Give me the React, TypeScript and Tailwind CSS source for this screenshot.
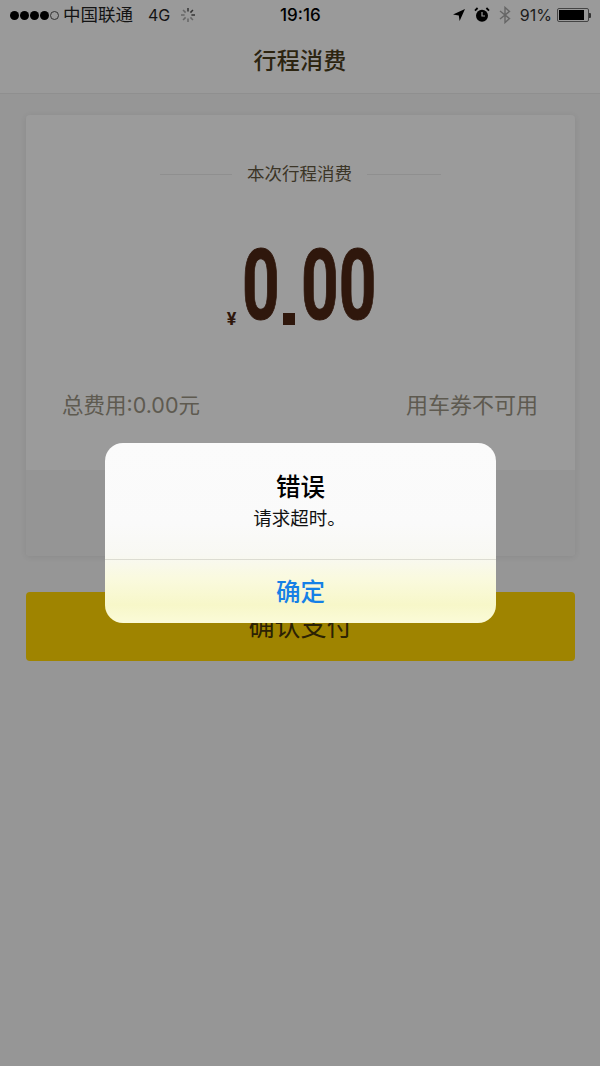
const cjk = "font-['Inter','Noto_Sans_CJK_SC',sans-serif]";

function SignalDots() {
  return (
    <div className="flex items-center gap-[1px]">
      {[0, 1, 2, 3].map((i) => (
        <span key={i} className="w-[9px] h-[9px] rounded-full bg-black" />
      ))}
      <span className="w-[9px] h-[9px] rounded-full border border-[#333]" />
    </div>
  );
}

function Spinner() {
  const lines = [0, 45, 90, 135, 180, 225, 270, 315];
  return (
    <svg width="16" height="16" viewBox="0 0 16 16" className="ml-[10px]">
      {lines.map((deg, i) => (
        <line
          key={deg}
          x1="8"
          y1="1"
          x2="8"
          y2="4.6"
          stroke={i < 3 ? "#333" : "#666"}
          strokeWidth="1.5"
          transform={`rotate(${deg} 8 8)`}
        />
      ))}
    </svg>
  );
}

function StatusBar() {
  return (
    <div className={`relative flex items-center h-[30px] pl-[10px] pr-[9px] text-[16px] text-[#141414] ${cjk}`}>
      <SignalDots />
      <span className="ml-[4px] text-[17.5px]">中国联通</span>
      <span className="ml-[15px]">4G</span>
      <Spinner />
      <span className="absolute left-[280px] top-[3px] text-[17px] font-medium text-black">19:16</span>
      <div className="ml-auto flex items-center">
        <svg width="14" height="14" viewBox="0 0 14 14">
          <path d="M13 1 L1 6.6 L6.8 7.4 L7.6 13 Z" fill="#000" />
        </svg>
        <svg width="16" height="16" viewBox="0 0 16 16" className="ml-[8px]">
          <circle cx="8" cy="8.8" r="6" fill="#000" />
          <path d="M8 5 V9 H11" stroke="#999" strokeWidth="1.2" fill="none" />
          <path d="M1 3.6 L3.6 1 M15 3.6 L12.4 1" stroke="#000" strokeWidth="1.8" />
        </svg>
        <svg width="12" height="18" viewBox="0 0 12 18" className="ml-[9px]">
          <path d="M1 5 L10.5 12.6 L6 16.6 V1.4 L10.5 5.4 L1 13" stroke="#666" strokeWidth="1.4" fill="none" />
        </svg>
        <span className="ml-[9px] text-[16px] text-[#1c1c1c]">91%</span>
        <div className="ml-[5px] flex items-center">
          <div className="w-[32px] h-[14px] border border-[#444] rounded-[2px] p-[1px]">
            <div className="w-[91%] h-full bg-black" />
          </div>
          <div className="w-[2px] h-[5px] bg-[#333] rounded-r-[1px]" />
        </div>
      </div>
    </div>
  );
}

const digits =
  "font-['Roboto',sans-serif] font-bold text-[98px] leading-[78px] h-[78px] origin-left scale-x-[0.67] whitespace-nowrap mb-[10px] [-webkit-text-stroke:1px_#2f170c]";

export default function App() {
  return (
    <div className={`relative w-[600px] h-[1066px] overflow-hidden bg-[#969696] ${cjk}`}>
      <div className="bg-[#9a9a9a] h-[94px] border-b border-[#8f8f8f]">
        <StatusBar />
        <div className="h-[63px] flex items-center justify-center text-[23px] tracking-[0.3px] font-medium text-[#2c2410]">
          行程消费
        </div>
      </div>

      <div className="ml-[26px] mr-[25px] mt-[21px] h-[441px] rounded-[4px] overflow-hidden shadow-[0_1px_6px_rgba(0,0,0,0.08)] flex flex-col bg-[#9b9b9b]">
        <div className="h-[355px] flex flex-col">
          <div className="mt-[47px] flex items-center justify-center gap-[15px] text-[17.5px] leading-[24px] text-[#3b3527]">
            <span className="w-[72px] h-px bg-[#8f8f8f]" />
            <span>本次行程消费</span>
            <span className="w-[74px] h-px bg-[#8f8f8f]" />
          </div>
          <div className="mt-[49px] h-[100px] flex items-end justify-center text-[#2f170c]">
            <span className="text-[18px] leading-[20px] font-bold mr-[6px] mb-[6px] ml-[-2px] font-['Roboto',sans-serif]">¥</span>
            <span className={`${digits} w-[41px]`}>0</span>
            <span className="w-[12px] h-[12px] bg-[#2f170c] mb-[10px] mr-[6px] shrink-0" />
            <span className={`${digits} w-[71px]`}>00</span>
          </div>
          <div className="mt-[55px] flex justify-between pl-[36px] pr-[37px] text-[22px] leading-[30px] text-[#5e5a50]">
            <span className="text-[21.5px]">总费用:0.00元</span>
            <span>用车券不可用</span>
          </div>
        </div>
        <div className="flex-1 bg-[#959595]" />
      </div>

      <div className="ml-[26px] mr-[25px] mt-[36px] h-[69px] rounded-[4px] bg-[#9f8400] flex items-center justify-center text-[26px] text-[#2c2204]">
        确认支付
      </div>

      <div className="absolute left-[105px] top-[443px] w-[391px] h-[180px] rounded-[18px] overflow-hidden flex flex-col bg-[linear-gradient(to_bottom,#fbfbfb_0%,#fafafa_45%,#f8f8f3_62%,#fafadf_75%,#f7f7c9_90%,#fbfbd8_100%)]">
        <div className="h-[117px] flex flex-col items-center border-b border-[#dcdcd2]">
          <div className="mt-[28px] text-[24.5px] leading-[32px] font-medium text-black">错误</div>
          <div className="mt-[2px] ml-[-2px] text-[18.5px] leading-[26px] text-[#111]">请求超时。</div>
        </div>
        <div className="flex-1 flex items-center justify-center pt-[2px] text-[24.5px] font-medium text-[#1580e6]">
          确定
        </div>
      </div>
    </div>
  );
}
